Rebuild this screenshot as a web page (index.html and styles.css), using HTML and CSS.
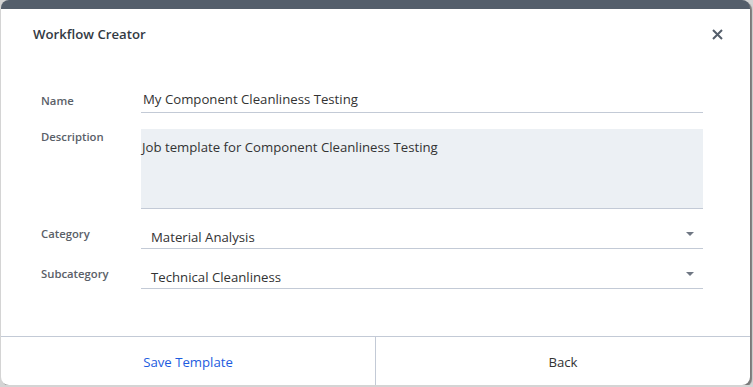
FILE: index.html
```html
<!DOCTYPE html>
<html lang="en">
<head>
    <meta charset="UTF-8">
    <title>Workflow Creator</title>
    <link rel="stylesheet" href="styles.css">
</head>
<body>
    <div class="dialog">
        <div class="dialog-header">
            <h1>Workflow Creator</h1>
            <button class="close" aria-label="Close">
                <svg width="11" height="11" viewBox="0 0 11 11"><path d="M1 1L10 10M10 1L1 10" stroke="#545e6b" stroke-width="2"/></svg>
            </button>
        </div>

        <div class="form">
            <label class="field-label">Name</label>
            <div class="input">My Component Cleanliness Testing</div>

            <label class="field-label desc-label">Description</label>
            <div class="textarea">Job template for Component Cleanliness Testing</div>

            <label class="field-label">Category</label>
            <div class="select">Material Analysis <span class="caret"></span></div>

            <label class="field-label">Subcategory</label>
            <div class="select">Technical Cleanliness <span class="caret"></span></div>
        </div>

        <div class="dialog-footer">
            <button class="footer-btn primary">Save Template</button>
            <button class="footer-btn">Back</button>
        </div>
    </div>
</body>
</html>
```

FILE: styles.css
```css
body {
    margin: 0;
    background-color: #d4d4d4;
    font-family: 'Open Sans', 'Noto Sans', sans-serif;
    color: #333;
}
.dialog {
    width: 749px;
    height: 376px;
    margin-left: 1px;
    background-color: white;
    border-top: 9px solid #545e6b;
    border-radius: 8px;
    box-shadow: 2px 2px 1px #7a7a7a;
    display: flex;
    flex-direction: column;
    overflow: hidden;
}
.dialog-header {
    display: flex;
    align-items: center;
    justify-content: space-between;
    padding: 15px 27px 0 32px;
    height: 20px;
}
.dialog-header h1 {
    margin: 0;
    font-size: 13.2px;
    font-weight: 600;
    color: #333a44;
}
.close {
    border: none;
    background: none;
    padding: 0;
    width: 11px;
    height: 11px;
    cursor: pointer;
}
.close svg {
    display: block;
}
.form {
    display: grid;
    grid-template-columns: 100px 1fr;
    align-items: end;
    align-content: start;
    row-gap: 16px;
    padding: 42px 47px 0 40px;
    flex: 1;
}
.field-label {
    font-size: 11.3px;
    line-height: 16px;
    font-weight: 600;
    color: #5a6068;
    padding-bottom: 4px;
}
.desc-label {
    align-self: start;
}
.select + .field-label,
.textarea + .field-label {
    padding-bottom: 7px;
}
.input {
    font-size: 13.2px;
    line-height: 20px;
    padding: 3px 2px;
    border-bottom: 1px solid #c3cad6;
}
.textarea {
    font-size: 13.2px;
    line-height: 20px;
    height: 80px;
    box-sizing: border-box;
    padding: 8px 1px 0;
    background-color: #ecf0f4;
    border-bottom: 1px solid #c3cad6;
}
.select {
    position: relative;
    font-size: 13.2px;
    line-height: 20px;
    padding: 2px 10px 1px;
    border-bottom: 1px solid #c3cad6;
}
.caret {
    position: absolute;
    right: 9px;
    top: 7px;
    border-left: 4px solid transparent;
    border-right: 4px solid transparent;
    border-top: 4px solid #6f7783;
}
.dialog-footer {
    display: flex;
    border-top: 1px solid #c3cad6;
    height: 48px;
}
.footer-btn {
    flex: 1;
    border: none;
    background: none;
    padding: 2px 0 0;
    font-family: inherit;
    font-size: 13.2px;
    color: #333;
    cursor: pointer;
}
.footer-btn.primary {
    color: #1d5ce0;
    border-right: 1px solid #c3cad6;
}
```
